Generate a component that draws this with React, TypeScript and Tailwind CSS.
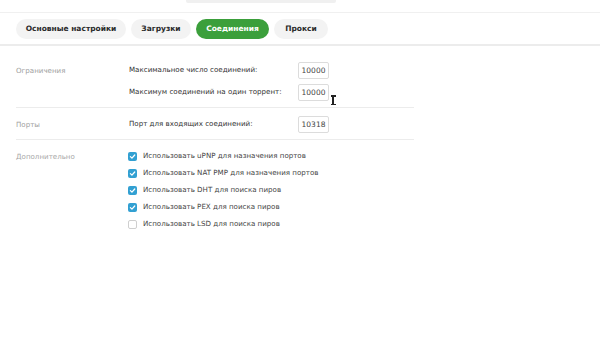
import React from "react";

const tabs = [
  { label: "Основные настройки", active: false, w: "w-[110px]" },
  { label: "Загрузки", active: false, w: "w-[60px]" },
  { label: "Соединения", active: true, w: "w-[73px]" },
  { label: "Прокси", active: false, w: "w-[54px]" },
];

function Check({ checked }: { checked: boolean }) {
  return checked ? (
    <span className="w-[9px] h-[9px] rounded-[2px] bg-[#32a0d2] flex items-center justify-center shrink-0">
      <svg width="7" height="7" viewBox="0 0 10 10">
        <path d="M2 5.2 L4.2 7.3 L8.2 2.8" stroke="white" strokeWidth="1.8" fill="none" strokeLinecap="round" strokeLinejoin="round" />
      </svg>
    </span>
  ) : (
    <span className="w-[9px] h-[9px] rounded-[2px] border border-[#cfcfcf] bg-white shrink-0" />
  );
}

function Input({ value }: { value: string }) {
  return (
    <div className="w-[31px] h-[17px] border border-[#dcdcdc] rounded-[2px] bg-white flex items-center justify-center text-[7.5px] text-[#444]">
      {value}
    </div>
  );
}

export default function App() {
  const checks = [
    { t: "Использовать uPNP для назначения портов", c: true },
    { t: "Использовать NAT PMP для назначения портов", c: true },
    { t: "Использовать DHT для поиска пиров", c: true },
    { t: "Использовать PEX для поиска пиров", c: true },
    { t: "Использовать LSD для поиска пиров", c: false },
  ];
  return (
    <div
      className="w-[600px] h-[337px] bg-white overflow-hidden relative"
      style={{ fontFamily: '"DejaVu Sans", Verdana, sans-serif' }}
    >
      {/* top strip */}
      <div className="h-[13px] border-b border-[#f0f0f0] flex">
        <div className="ml-[186px] w-[150px] h-[3px] bg-[#f0f0f0] rounded-b-[2px]" />
      </div>
      {/* tabs */}
      <div className="h-[33px] border-b-2 border-[#ececec] flex items-start pt-[6px] pl-[16px] gap-[5px]">
        {tabs.map((t) => (
          <div
            key={t.label}
            className={`${t.w} h-[20px] rounded-full flex items-center justify-center text-[7.5px] font-bold ${
              t.active ? "bg-[#3b9f3b] text-white" : "bg-[#f3f3f3] text-[#2a2a2a]"
            }`}
          >
            {t.label}
          </div>
        ))}
      </div>

      <div className="w-[398px] ml-[16px] text-[7.1px]">
        {/* limits */}
        <div className="flex pt-[16px] pb-[6px] border-b border-[#ececec]">
          <div className="w-[113px] text-[#a0a0a0] pt-[4px]">Ограничения</div>
          <div className="flex flex-col gap-[5px]">
            <div className="flex items-center w-[200px] justify-between">
              <span className="text-[#333]">Максимальное число соединений:</span>
              <Input value="10000" />
            </div>
            <div className="flex items-center w-[200px] justify-between">
              <span className="text-[#333]">Максимум соединений на один торрент:</span>
              <Input value="10000" />
            </div>
          </div>
        </div>
        {/* ports */}
        <div className="flex pt-[8px] pb-[6px] border-b border-[#ececec]">
          <div className="w-[113px] text-[#a0a0a0] pt-[4px]">Порты</div>
          <div className="flex items-center w-[200px] justify-between">
            <span className="text-[#333]">Порт для входящих соединений:</span>
            <Input value="10318" />
          </div>
        </div>
        {/* extra */}
        <div className="flex pt-[12px]">
          <div className="w-[112px] text-[#a8a8a8]">Дополнительно</div>
          <div className="flex flex-col gap-[8px]">
            {checks.map((c) => (
              <div key={c.t} className="flex items-center gap-[6px] h-[9px]">
                <Check checked={c.c} />
                <span className="text-[#444]">{c.t}</span>
              </div>
            ))}
          </div>
        </div>
      </div>

      {/* text cursor */}
      <div className="absolute left-[330px] top-[95px] w-[6px] h-[10px] flex flex-col items-center">
        <div className="w-[5px] h-[1.5px] bg-[#222]" />
        <div className="w-[1.5px] flex-1 bg-[#222]" />
        <div className="w-[5px] h-[1.5px] bg-[#222]" />
      </div>
    </div>
  );
}
